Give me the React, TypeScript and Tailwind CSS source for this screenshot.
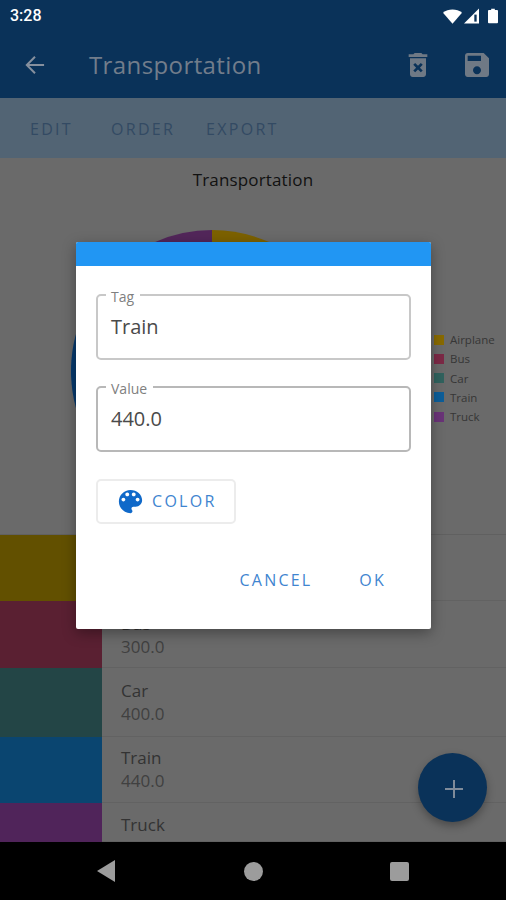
const font = { fontFamily: '"Open Sans", sans-serif' };

function Slice({ from, to, color }: { from: number; to: number; color: string }) {
  const r = 141;
  const pt = (a: number) => {
    const t = ((a - 90) * Math.PI) / 180;
    return `${141 + r * Math.cos(t)} ${141 + r * Math.sin(t)}`;
  };
  return <path d={`M141 141 L${pt(from)} A${r} ${r} 0 ${to - from > 180 ? 1 : 0} 1 ${pt(to)} Z`} fill={color} />;
}

const rows = [
  { name: "Airplane", value: "200.0", color: "bg-[#625000]", h: "h-[66px]", pt: "pt-[11px]" },
  { name: "Bus", value: "300.0", color: "bg-[#5a2032]", h: "h-[67px]", pt: "pt-[11px]" },
  { name: "Car", value: "400.0", color: "bg-[#234546]", h: "h-[69px]", pt: "pt-[11px]" },
  { name: "Train", value: "440.0", color: "bg-[#0a4570]", h: "h-[66px]", pt: "pt-[9px]" },
  { name: "Truck", value: "", color: "bg-[#50245a]", h: "h-[39px]", pt: "pt-[10px]" },
];

const legend = [
  { name: "Airplane", color: "bg-[#886a00]" },
  { name: "Bus", color: "bg-[#7c2946]" },
  { name: "Car", color: "bg-[#30625e]" },
  { name: "Train", color: "bg-[#0c5e99]" },
  { name: "Truck", color: "bg-[#6a3378]" },
];

function Field({ label, value, labelW, border }: { label: string; value: string; labelW: string; border: string }) {
  return (
    <div className={`relative h-[66px] rounded-[5px] border-2 ${border} px-[13px] pt-[14px] text-[20px] leading-[34px] text-[#4a4a4a]`}>
      <span className={`absolute left-[8px] -top-[7px] ${labelW} bg-white px-[5px] text-[14px] leading-[16px] text-[#808080]`}>{label}</span>
      {value}
    </div>
  );
}

export default function App() {
  return (
    <div className="relative flex h-[900px] w-[506px] flex-col overflow-hidden bg-[#6a6a6a]" style={font}>
      <div className="h-[98px] shrink-0 bg-[#0a3259]">
        <div className="flex h-[32px] items-center justify-between pl-[10px] pr-[8px]">
          <span className="text-[16px] font-medium text-white" style={{ fontFamily: "Roboto, sans-serif" }}>3:28</span>
          <div className="flex items-center">
            <svg width="19" height="15" viewBox="0 0 20 15" className="mr-[2px]"><path d="M0 3.5 C5.5 -1 14.5 -1 20 3.5 L10 15 Z" fill="#fff" /></svg>
            <svg width="15" height="16" viewBox="0 0 16 16" className="mr-[9px]"><path d="M0 16 L16 0 V16 Z" fill="#fff" /><path d="M11 6.5 h2.5 V14 H11 Z" fill="#0a3259" /></svg>
            <svg width="10" height="16" viewBox="0 0 11 16"><path d="M3.5 0 h4 v1.5 H10 a1 1 0 0 1 1 1 V15 a1 1 0 0 1 -1 1 H1 a1 1 0 0 1 -1 -1 V2.5 a1 1 0 0 1 1 -1 h2.5 Z" fill="#fff" /></svg>
          </div>
        </div>
        <div className="flex h-[66px] items-center pl-[25px] pr-[13px]">
          <svg width="20" height="20" viewBox="0 0 22 22" fill="none" stroke="#86909e" strokeWidth="2.2"><path d="M21 11 H2 M11 2 L2 11 L11 20" /></svg>
          <span className="ml-[44px] flex-1 text-[24px] tracking-[0.4px] text-[#727d8b]">Transportation</span>
          <svg width="32" height="32" viewBox="0 0 24 24" fill="#6f7985" className="mr-[27px]"><path d="M6 19c0 1.1.9 2 2 2h8c1.1 0 2-.9 2-2V7H6v12zm2.46-7.12l1.41-1.41L12 12.59l2.12-2.12 1.41 1.41L13.41 14l2.12 2.12-1.41 1.41L12 15.41l-2.12 2.12-1.41-1.41L10.59 14l-2.13-2.12zM15.5 4l-1-1h-5l-1 1H5v2h14V4z" /></svg>
          <svg width="32" height="32" viewBox="0 0 24 24" fill="#6f7985"><path d="M17 3H5c-1.11 0-2 .9-2 2v14c0 1.1.89 2 2 2h14c1.1 0 2-.9 2-2V7l-4-4zm-5 16c-1.66 0-3-1.34-3-3s1.34-3 3-3 3 1.34 3 3-1.34 3-3 3zm3-10H5V5h10v4z" /></svg>
        </div>
      </div>

      <div className="flex h-[60px] shrink-0 items-center bg-[#526474] pl-[30px] pt-[2px] text-[16px] tracking-[2.3px] text-[#334a63]">
        <span className="w-[81px]">EDIT</span>
        <span className="w-[95px]">ORDER</span>
        <span>EXPORT</span>
      </div>

      <div className="h-[376px] shrink-0 overflow-hidden">
        <div className="h-[72px] pt-[10px] text-center text-[17px] leading-[24px] tracking-[0.15px] text-[#111]">Transportation</div>
        <div className="flex">
          <svg width="282" height="282" viewBox="0 0 282 282" className="ml-[71px] shrink-0">
            <Slice from={0} to={46.7} color="#7c6100" />
            <Slice from={46.7} to={116.9} color="#7c2946" />
            <Slice from={116.9} to={210} color="#30625e" />
            <Slice from={210} to={313} color="#063a6e" />
            <Slice from={313} to={360} color="#52265a" />
          </svg>
          <div className="ml-[81px] mt-[100px] flex flex-col text-[11.5px] leading-[19.25px] text-[#363636]">
            {legend.map((l) => (
              <div key={l.name} className="flex items-center">
                <span className={`mr-[6px] h-[10px] w-[10px] ${l.color}`} />
                {l.name}
              </div>
            ))}
          </div>
        </div>
      </div>

      <div className="flex-1 overflow-hidden border-t border-[#606060]">
        {rows.map((r) => (
          <div key={r.name} className={`flex ${r.h} overflow-hidden`}>
            <div className={`w-[102px] shrink-0 ${r.color}`} />
            <div className={`flex-1 border-b border-[#626262] pl-[19px] ${r.pt} text-[17px] leading-[23px]`}>
              <div className="font-medium text-[#333]">{r.name}</div>
              {r.value && <div className="text-[#404040]">{r.value}</div>}
            </div>
          </div>
        ))}
      </div>

      <div className="flex h-[58px] shrink-0 items-center bg-black">
        <svg width="18" height="22" viewBox="0 0 18 22" className="ml-[97px]"><path d="M18 0 V22 L0 11 Z" fill="#9c9c9c" /></svg>
        <span className="ml-[129px] h-[19px] w-[19px] rounded-full bg-[#9c9c9c]" />
        <span className="ml-[127px] h-[19px] w-[19px] rounded-[2px] bg-[#9c9c9c]" />
      </div>

      <div className="absolute left-[418px] top-[753px] flex h-[69px] w-[69px] items-center justify-center rounded-full bg-[#0a3259] pl-[2px] pt-[2px] shadow-[0_4px_8px_rgba(0,0,0,0.3)]">
        <svg width="18" height="18" viewBox="0 0 18 18" stroke="#7f8b9a" strokeWidth="2"><path d="M9 0 V18 M0 9 H18" /></svg>
      </div>

      <div className="absolute left-[76px] top-[242px] h-[387px] w-[355px] overflow-hidden rounded-[2px] bg-white shadow-[0_4px_14px_rgba(0,0,0,0.35)]">
        <div className="h-[24px] bg-[#2196f3]" />
        <div className="px-[20px] pt-[28px]">
          <div className="flex flex-col gap-[26px]">
            <Field label="Tag" value="Train" labelW="w-[34px]" border="border-[#c8c8c8]" />
            <Field label="Value" value="440.0" labelW="w-[47px]" border="border-[#b8b8b8]" />
          </div>
          <div className="mt-[27px] flex h-[45px] w-[140px] items-center rounded-[5px] border-2 border-[#ececec] pb-[2px] pl-[17px] text-[16px] tracking-[2.3px] text-[#3f85d0]">
            <svg width="31" height="31" viewBox="0 0 24 24" fill="#1069c9" className="mr-[6px] mt-[2px] shrink-0"><path d="M12 3c-4.97 0-9 4.03-9 9s4.03 9 9 9c.83 0 1.5-.67 1.5-1.5 0-.39-.15-.74-.39-1.01-.23-.26-.38-.61-.38-.99 0-.83.67-1.5 1.5-1.5H16c2.76 0 5-2.24 5-5 0-4.42-4.03-8-9-8zm-5.5 9c-.83 0-1.5-.67-1.5-1.5S5.67 9 6.5 9 8 9.67 8 10.5 7.33 12 6.5 12zm3-4C8.67 8 8 7.33 8 6.5S8.67 5 9.5 5s1.5.67 1.5 1.5S10.33 8 9.5 8zm5 0c-.83 0-1.5-.67-1.5-1.5S13.67 5 14.5 5s1.5.67 1.5 1.5S15.33 8 14.5 8zm3 4c-.83 0-1.5-.67-1.5-1.5S16.67 9 17.5 9s1.5.67 1.5 1.5-.67 1.5-1.5 1.5z" /></svg>
            COLOR
          </div>
          <div className="mt-[44px] flex justify-end pr-[25px] text-[16px] leading-[24px] tracking-[2.2px] text-[#3f85d0]">
            <span className="mr-[47px]">CANCEL</span>
            <span>OK</span>
          </div>
        </div>
      </div>
    </div>
  );
}
